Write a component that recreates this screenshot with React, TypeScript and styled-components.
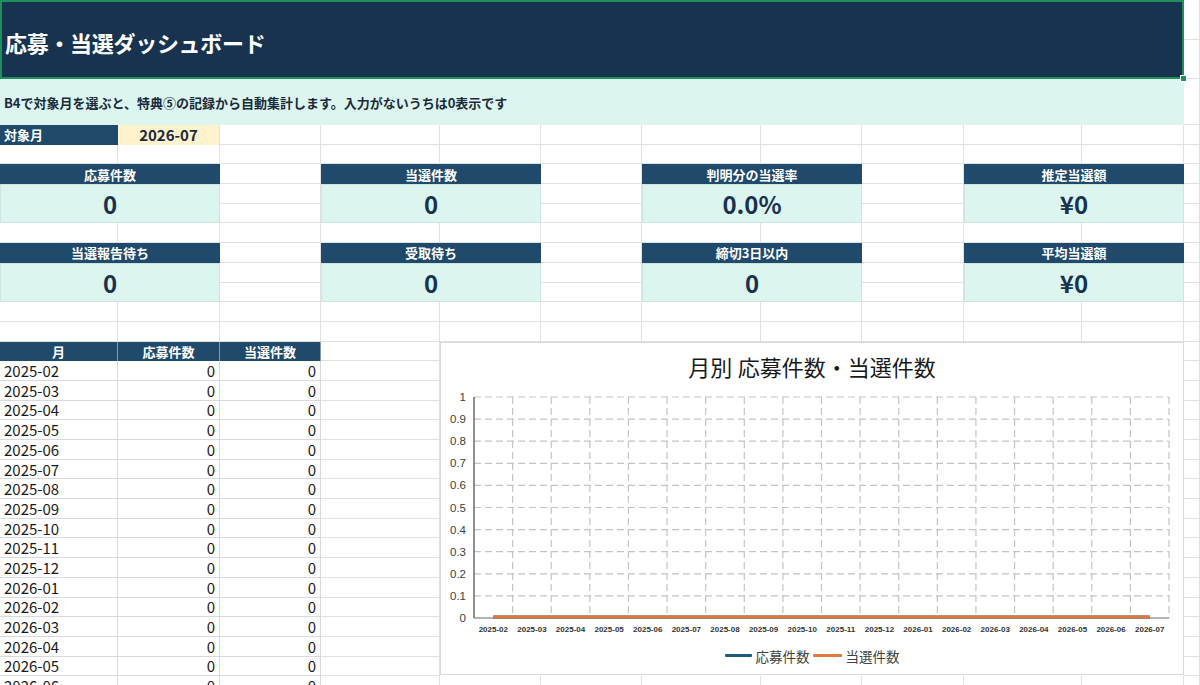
import React from 'react';
import styled, { createGlobalStyle } from 'styled-components';

const FONT = `"Noto Sans CJK JP", "Noto Sans", sans-serif`;
const ROW_H = 19.7;
const NAVY = '#1f4a6c';
const TITLE_NAVY = '#183350';
const MINT = '#dcf5ef';
const INK = '#17324f';
const GRID = '#e1e1e1';

const GlobalStyle = createGlobalStyle`
  html, body { margin: 0; padding: 0; background: #fff; }
  body { font-family: ${FONT}; overflow: hidden; }
  * { box-sizing: border-box; }
`;

const Sheet = styled.div`
  display: grid;
  grid-template-columns: 118px 102px 101px 119px 101px 101px 119px 101px 102px 118px 102px 1fr;
  grid-template-rows: 39.5px 39.5px 46px;
  grid-auto-rows: ${ROW_H}px;
  width: 1200px;
  height: 685px;
  overflow: hidden;
`;

const GridCell = styled.div`
  border-right: 1px solid ${GRID};
  border-bottom: 1px solid ${GRID};
`;

const TitleBar = styled.div`
  grid-column: 1 / 12;
  grid-row: 1 / 3;
  position: relative;
  background: ${TITLE_NAVY};
  border: 2px solid #1f8f5a;
  display: flex;
  align-items: center;
  padding: 4px 0 0 3px;
  color: #fff;
  font-size: 22px;
  font-weight: 700;
  letter-spacing: -0.3px;
`;

const SelectionHandle = styled.span`
  position: absolute;
  right: -5px;
  bottom: -5px;
  width: 7px;
  height: 7px;
  background: #1f8f5a;
  border: 1px solid #fff;
`;

const Note = styled.div`
  grid-column: 1 / 12;
  grid-row: 3;
  background: ${MINT};
  display: flex;
  align-items: center;
  padding-left: 4px;
  font-size: 13px;
  font-weight: 700;
  color: #1b2b3c;
`;

const LabelCell = styled.div`
  grid-column: 1;
  grid-row: 4;
  background: ${NAVY};
  color: #fff;
  font-size: 13px;
  font-weight: 700;
  display: flex;
  align-items: center;
  padding-left: 4px;
`;

const MonthCell = styled.div`
  grid-column: 2;
  grid-row: 4;
  background: #fff2cc;
  color: #1b2b3c;
  font-size: 15px;
  font-weight: 700;
  display: flex;
  align-items: center;
  justify-content: center;
  border-right: 1px solid ${GRID};
`;

const Card = styled.div<{ $col: number; $row: number }>`
  grid-column: ${(p) => p.$col} / span 2;
  grid-row: ${(p) => p.$row} / span 3;
  display: grid;
  grid-template-rows: ${ROW_H}px 1fr;
`;

const CardHead = styled.div`
  background: ${NAVY};
  color: #fff;
  font-size: 13px;
  font-weight: 700;
  display: flex;
  align-items: center;
  justify-content: center;
`;

const CardValue = styled.div`
  background: ${MINT};
  border: 1px solid #cde4df;
  color: ${INK};
  font-size: 24px;
  font-weight: 700;
  display: flex;
  align-items: center;
  justify-content: center;
`;

const Table = styled.div`
  grid-column: 1 / 4;
  grid-row: 15 / span 19;
  display: grid;
  grid-template-columns: 118px 102px 101px;
  grid-auto-rows: ${ROW_H}px;
  align-content: start;
`;

const TH = styled.div`
  background: ${NAVY};
  color: #fff;
  font-size: 13px;
  font-weight: 700;
  display: flex;
  align-items: center;
  justify-content: center;
  border-right: 1px solid rgba(255, 255, 255, 0.45);
`;

const TD = styled.div<{ $num?: boolean }>`
  border-right: 1px solid #d6dae0;
  border-bottom: 1px solid #d6dae0;
  display: flex;
  align-items: center;
  justify-content: ${(p) => (p.$num ? 'flex-end' : 'flex-start')};
  padding: 0 4px 0 4px;
  font-size: 15px;
  color: #1a1a1a;
  background: #fff;
`;

const ChartBox = styled.div`
  grid-column: 5 / 12;
  grid-row: 15 / span 17;
  height: 333px;
  align-self: start;
  background: #fff;
  border: 1px solid #d9d9d9;
  display: flex;
  flex-direction: column;
`;

const ChartTitle = styled.div`
  height: 46px;
  display: flex;
  align-items: center;
  justify-content: center;
  font-family: "Liberation Serif", "Noto Sans CJK JP", serif;
  font-size: 22px;
  color: #1a1a1a;
`;

const Plot = styled.svg`
  display: block;
  width: 742px;
  height: 254px;
`;

const Legend = styled.div`
  height: 26px;
  display: flex;
  align-items: center;
  justify-content: center;
  gap: 3px;
`;

const LegendItem = styled.div`
  display: flex;
  align-items: center;
  gap: 4px;
  font-size: 13.5px;
  color: #404040;
`;

const LegendSwatch = styled.span<{ $color: string; $w: number }>`
  display: inline-block;
  width: ${(p) => p.$w}px;
  height: 3px;
  border-radius: 1px;
  background: ${(p) => p.$color};
`;

const BLUE = '#1e5b7a';
const ORANGE = '#e2783a';

const months = [
  '2025-02', '2025-03', '2025-04', '2025-05', '2025-06', '2025-07', '2025-08', '2025-09',
  '2025-10', '2025-11', '2025-12', '2026-01', '2026-02', '2026-03', '2026-04', '2026-05',
  '2026-06', '2026-07',
];

const cards = [
  { col: 1, row: 6, label: '応募件数', value: '0' },
  { col: 4, row: 6, label: '当選件数', value: '0' },
  { col: 7, row: 6, label: '判明分の当選率', value: '0.0%' },
  { col: 10, row: 6, label: '推定当選額', value: '¥0' },
  { col: 1, row: 10, label: '当選報告待ち', value: '0' },
  { col: 4, row: 10, label: '受取待ち', value: '0' },
  { col: 7, row: 10, label: '締切3日以内', value: '0' },
  { col: 10, row: 10, label: '平均当選額', value: '¥0' },
];

const PX0 = 33;
const PX1 = 728;
const PY0 = 8;
const PY1 = 229;
const CAT = (PX1 - PX0) / months.length;
const STEP = (PY1 - PY0) / 10;

const MonthlyChart: React.FC = () => {
  const yTicks = Array.from({ length: 11 }, (_, i) => i);
  const first = PX0 + CAT / 2;
  const last = PX0 + CAT * (months.length - 0.5);
  return (
    <ChartBox>
      <ChartTitle>月別 応募件数・当選件数</ChartTitle>
      <Plot viewBox="0 0 742 254">
        {yTicks.slice(0, 10).map((i) => (
          <line
            key={`h${i}`}
            x1={PX0}
            x2={PX1}
            y1={PY0 + i * STEP}
            y2={PY0 + i * STEP}
            stroke="#c4c4c4"
            strokeWidth={1.2}
            strokeDasharray="7 4"
          />
        ))}
        {months.map((_, k) => (
          <line
            key={`v${k}`}
            x1={PX0 + (k + 1) * CAT}
            x2={PX0 + (k + 1) * CAT}
            y1={PY0}
            y2={PY1}
            stroke="#c4c4c4"
            strokeWidth={1.2}
            strokeDasharray="7 4"
          />
        ))}
        <line x1={PX0} x2={PX0} y1={PY0} y2={PY1} stroke="#6b6b6b" strokeWidth={1.5} />
        <line x1={PX0} x2={PX1} y1={PY1} y2={PY1} stroke="#6b6b6b" strokeWidth={1.2} />
        <line x1={first} x2={last} y1={PY1 - 1} y2={PY1 - 1} stroke={BLUE} strokeWidth={3} />
        <line x1={first} x2={last} y1={PY1 - 1} y2={PY1 - 1} stroke={ORANGE} strokeWidth={3} />
        {yTicks.map((i) => (
          <text
            key={`yl${i}`}
            x={25}
            y={PY1 - i * STEP}
            textAnchor="end"
            dominantBaseline="central"
            fontFamily='"Liberation Sans", sans-serif'
            fontSize={11.5}
            fill="#404040"
          >
            {i === 10 ? '1' : i === 0 ? '0' : (i / 10).toFixed(1)}
          </text>
        ))}
        {months.map((m, k) => (
          <text
            key={`xl${m}`}
            x={PX0 + CAT * (k + 0.5)}
            y={240}
            textAnchor="middle"
            dominantBaseline="central"
            fontFamily='"Liberation Sans", sans-serif'
            fontSize={8}
            fontWeight={700}
            fill="#333"
          >
            {m}
          </text>
        ))}
      </Plot>
      <Legend>
        <LegendItem>
          <LegendSwatch $color={BLUE} $w={27} />
          応募件数
        </LegendItem>
        <LegendItem>
          <LegendSwatch $color={ORANGE} $w={29} />
          当選件数
        </LegendItem>
      </Legend>
    </ChartBox>
  );
};

export default function App() {
  const fillers = Array.from({ length: 12 * 34 }, (_, i) => i);
  return (
    <>
      <GlobalStyle />
      <Sheet>
        {fillers.map((i) => (
          <GridCell key={i} />
        ))}
        <TitleBar>
          応募・当選ダッシュボード
          <SelectionHandle />
        </TitleBar>
        <Note>B4で対象月を選ぶと、特典⑤の記録から自動集計します。入力がないうちは0表示です</Note>
        <LabelCell>対象月</LabelCell>
        <MonthCell>2026-07</MonthCell>
        {cards.map((c) => (
          <Card key={c.label} $col={c.col} $row={c.row}>
            <CardHead>{c.label}</CardHead>
            <CardValue>{c.value}</CardValue>
          </Card>
        ))}
        <Table>
          <TH>月</TH>
          <TH>応募件数</TH>
          <TH>当選件数</TH>
          {months.map((m) => (
            <React.Fragment key={m}>
              <TD>{m}</TD>
              <TD $num>0</TD>
              <TD $num>0</TD>
            </React.Fragment>
          ))}
        </Table>
        <MonthlyChart />
      </Sheet>
    </>
  );
}
